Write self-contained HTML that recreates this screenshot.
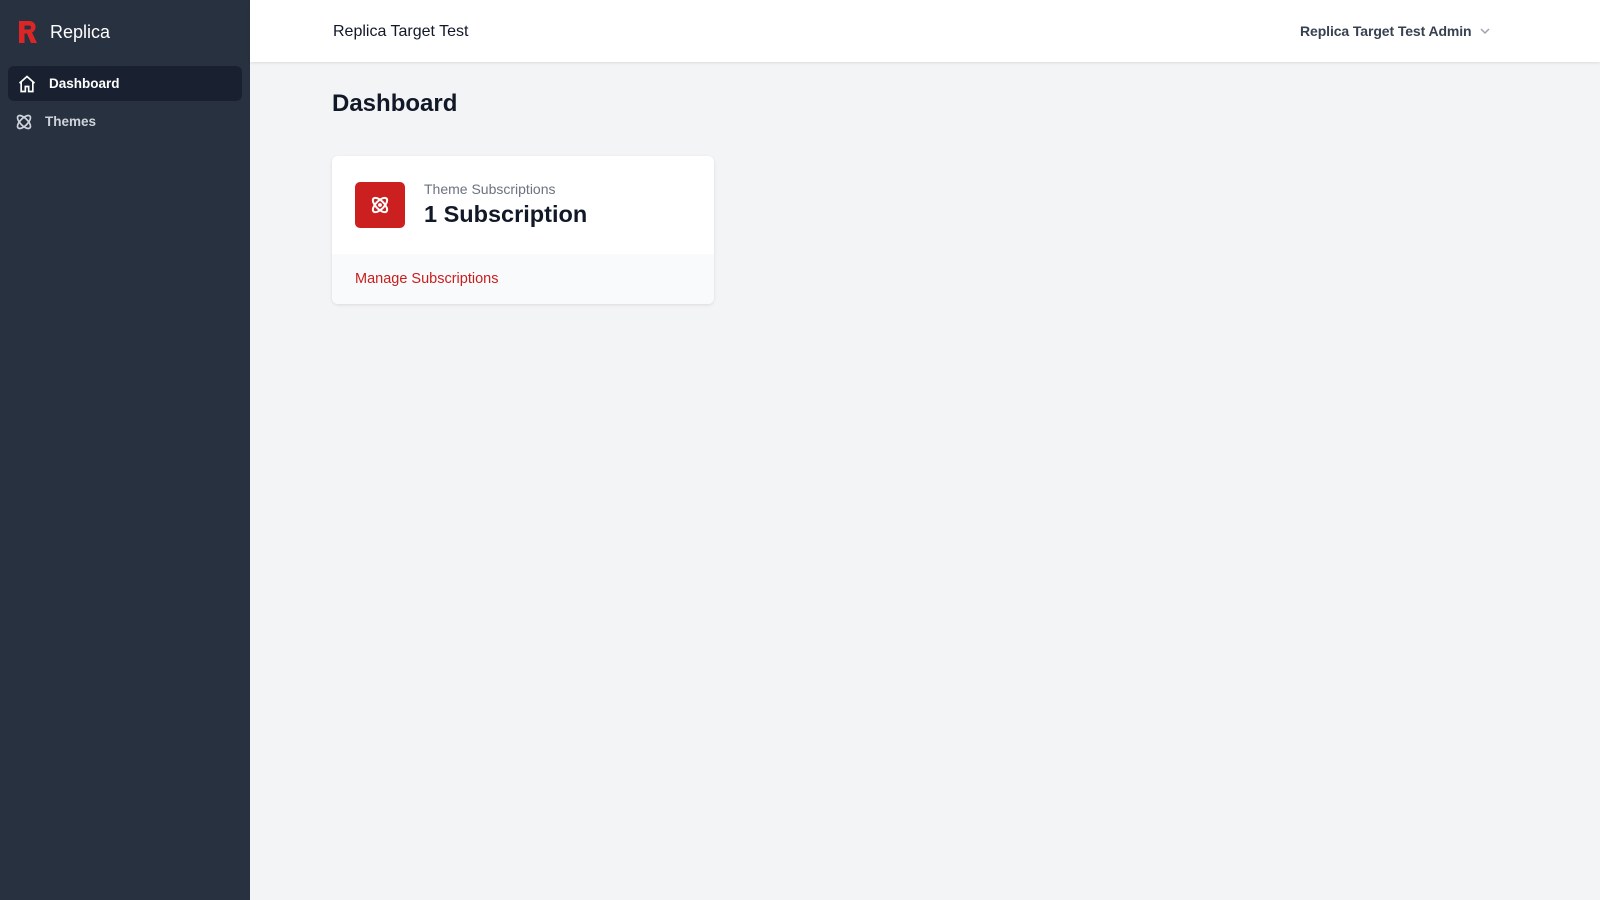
<!DOCTYPE html>
<html><head><meta charset="utf-8"><style>
*{box-sizing:border-box;margin:0;padding:0}
body{width:1600px;height:900px;font-family:"Liberation Sans",sans-serif;background:#f3f4f6;position:relative;overflow:hidden}
.side{position:absolute;left:0;top:0;width:250px;height:900px;background:#273140}
.logo{position:absolute;left:18px;top:20px;display:flex;align-items:center}
.logo span{color:#fff;font-size:18px;margin-left:12px;font-weight:500}
.nav{position:absolute;left:8px;width:234px;height:35px;border-radius:6px;display:flex;align-items:center;padding-left:8px;font-size:13.5px;font-weight:bold}
.nav.active{background:#192131;color:#fff}
.nav.t{color:#cfd4dc;font-weight:bold}
.nav svg{margin-right:11px}
.top{position:absolute;left:250px;top:0;right:0;height:62px;background:#fff;box-shadow:0 1px 3px rgba(0,0,0,.1)}
.top .t1{position:absolute;left:83px;top:23px;font-size:16px;color:#111827}
.top .t2{position:absolute;left:1050px;top:23px;font-size:14px;color:#374151;font-weight:bold;letter-spacing:-0.1px}
h1{position:absolute;left:332px;top:90px;font-size:24px;color:#111827}
.card{position:absolute;left:332px;top:156px;width:382px;height:148px;background:#fff;border-radius:6px;box-shadow:0 1px 3px rgba(0,0,0,.1);overflow:hidden}
.ic{position:absolute;left:23px;top:26px;width:50px;height:46px;background:#cc1f1f;border-radius:5px;display:flex;align-items:center;justify-content:center}
.l1{position:absolute;left:92px;top:25px;font-size:14px;color:#6b7280}
.l2{position:absolute;left:92px;top:45px;font-size:23.5px;font-weight:bold;color:#111827}
.foot{position:absolute;left:0;right:0;bottom:0;height:50px;background:#f9fafb;padding:17px 23px;font-size:14.5px;color:#c81e1e}
</style></head><body>
<div class="side">
<div class="logo"><svg width="20" height="24" viewBox="0 0 20 24"><path d="M1 1h11a6 6 0 0 1 2 11.5L19 23h-6l-4-9.5H6.5V23H1z M6.5 5.5v4h4.5a2 2 0 0 0 0-4z" fill="#dc2626" fill-rule="evenodd"/></svg><span>Replica</span></div>
<div class="nav active" style="top:66px"><svg width="22" height="20" viewBox="0 0 24 24" fill="none" stroke="#fff" stroke-width="2"><path d="M3 11l9-8 9 8M5 9v12h5v-6h4v6h5V9"/></svg>Dashboard</div>
<div class="nav t" style="top:104px;padding-left:6px"><svg width="20" height="20" viewBox="0 0 24 24" fill="none" stroke="#cfd4dc" stroke-width="2"><ellipse cx="12" cy="12" rx="10" ry="4.5" transform="rotate(45 12 12)"/><ellipse cx="12" cy="12" rx="10" ry="4.5" transform="rotate(-45 12 12)"/></svg>Themes</div>
</div>
<div class="top"><div class="t1">Replica Target Test</div><div class="t2">Replica Target Test Admin <svg width="12" height="10" viewBox="0 0 12 10" style="margin-left:4px"><path d="M2 3l4 4 4-4" stroke="#9ca3af" stroke-width="1.5" fill="none"/></svg></div></div>
<h1>Dashboard</h1>
<div class="card">
<div class="ic"><svg width="22" height="22" viewBox="0 0 24 24" fill="none" stroke="#fff" stroke-width="2.2"><ellipse cx="12" cy="12" rx="10" ry="4.5" transform="rotate(45 12 12)"/><ellipse cx="12" cy="12" rx="10" ry="4.5" transform="rotate(-45 12 12)"/><circle cx="12" cy="12" r="1" fill="#fff"/></svg></div>
<div class="l1">Theme Subscriptions</div>
<div class="l2">1 Subscription</div>
<div class="foot">Manage Subscriptions</div>
</div>
</body></html>
